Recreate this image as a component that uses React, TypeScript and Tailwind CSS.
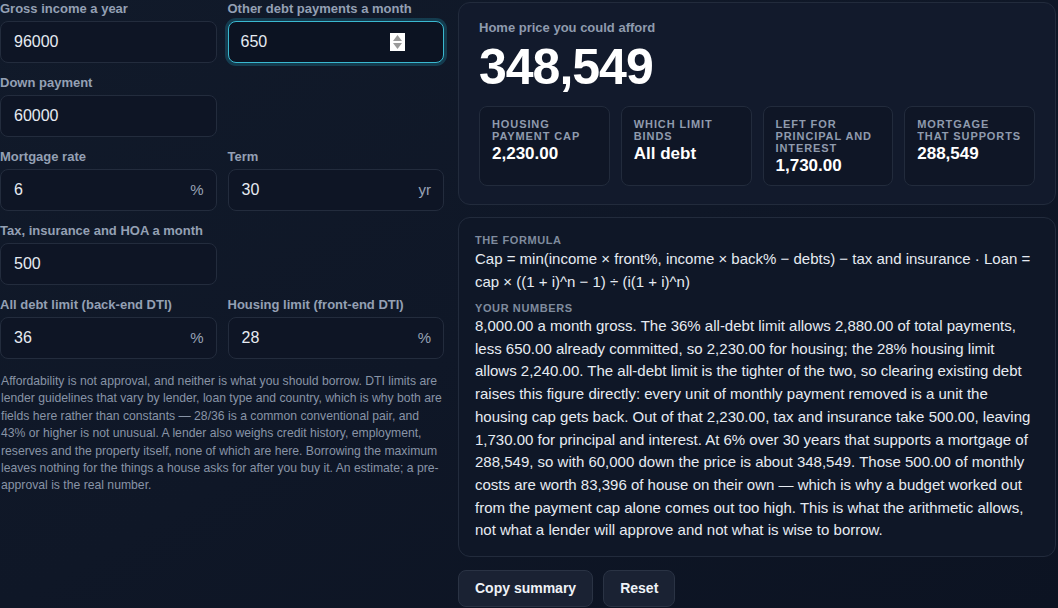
const font = { fontFamily: '"Liberation Sans", Arial, sans-serif' };

type FieldProps = {
  label: string;
  value: string;
  suffix?: string;
  focused?: boolean;
};

const Field = ({ label, value, suffix, focused }: FieldProps) => (
  <div className="flex flex-col">
    <label className="text-[13px] font-bold leading-[17px] text-[#94a0b4]">{label}</label>
    <div
      className={
        focused
          ? "relative mt-[4px] flex h-[42px] items-center rounded-lg border border-[#3ab8d0] bg-[#0c1322] pl-[12px] pr-[12px] shadow-[0_0_0_3px_rgba(34,150,180,0.28)]"
          : "relative mt-[4px] flex h-[42px] items-center rounded-lg border border-[#232c3d] bg-[#0e1525] pl-[13px] pr-[12px]"
      }
    >
      <span className="flex-1 text-[16px] text-[#e6ebf2]">{value}</span>
      {suffix && <span className="text-[15px] text-[#97a2b5]">{suffix}</span>}
      {focused && (
        <div className="absolute left-[161px] top-[11px] flex h-[18px] w-[15px] flex-col items-center justify-center gap-[2px] bg-white">
          <svg width="9" height="6" viewBox="0 0 9 6">
            <path d="M4.5 0L9 6H0z" fill="#9a9a9a" />
          </svg>
          <svg width="9" height="6" viewBox="0 0 9 6">
            <path d="M0 0h9L4.5 6z" fill="#9a9a9a" />
          </svg>
        </div>
      )}
    </div>
  </div>
);

const stats = [
  { label: "Housing payment cap", value: "2,230.00" },
  { label: "Which limit binds", value: "All debt" },
  { label: "Left for principal and interest", value: "1,730.00" },
  { label: "Mortgage that supports", value: "288,549" },
];

export default function App() {
  return (
    <div
      style={font}
      className="h-[608px] w-[1058px] overflow-hidden bg-gradient-to-br from-[#111a2a] via-[#0f1727] to-[#0c1322]"
    >
      <div className="grid grid-cols-[444px_600px] gap-[14px]">
        {/* Inputs */}
        <div className="flex flex-col">
          <div className="grid grid-cols-2 gap-x-[11px] gap-y-[11px]">
            <Field label="Gross income a year" value="96000" />
            <Field label="Other debt payments a month" value="650" focused />
            <Field label="Down payment" value="60000" />
            <div />
            <Field label="Mortgage rate" value="6" suffix="%" />
            <Field label="Term" value="30" suffix="yr" />
            <Field label="Tax, insurance and HOA a month" value="500" />
            <div />
            <Field label="All debt limit (back-end DTI)" value="36" suffix="%" />
            <Field label="Housing limit (front-end DTI)" value="28" suffix="%" />
          </div>
          <p className="mt-[14px] pl-[1px] text-[12.2px] leading-[17.4px] text-[#8894a6]">
            Affordability is not approval, and neither is what you should borrow. DTI limits are lender
            guidelines that vary by lender, loan type and country, which is why both are fields here rather
            than constants — 28/36 is a common conventional pair, and 43% or higher is not unusual. A lender
            also weighs credit history, employment, reserves and the property itself, none of which are here.
            Borrowing the maximum leaves nothing for the things a house asks for after you buy it. An
            estimate; a pre-approval is the real number.
          </p>
        </div>

        {/* Results */}
        <div className="flex flex-col">
          <div className="mt-[2px] w-[598px] rounded-xl border border-[#222b3c] bg-[#121a2c] px-[20px] pb-[18px] pt-[16px]">
            <div className="text-[13px] font-bold leading-[17px] text-[#8f9bae]">Home price you could afford</div>
            <div className="mt-[1px] text-[50px] font-bold leading-[60px] tracking-[-1px] text-white">348,549</div>
            <div className="mt-[9px] grid grid-cols-4 gap-[11px]">
              {stats.map((s) => (
                <div
                  key={s.label}
                  className="h-[80px] rounded-lg border border-[#222b3c] bg-[#0f1626] px-[12px] pt-[11px]"
                >
                  <div className="text-[11px] font-bold uppercase leading-[12px] tracking-[0.9px] text-[#8f9bae]">
                    {s.label}
                  </div>
                  <div className="mt-[1px] text-[17px] font-bold leading-[21px] text-white">{s.value}</div>
                </div>
              ))}
            </div>
          </div>

          <div className="mt-[12px] w-[598px] rounded-xl border border-[#222b3c] bg-[#0f1727] px-[16px] pb-[14px] pt-[15px]">
            <div className="text-[11px] font-bold uppercase leading-[14px] tracking-[0.6px] text-[#7f8b9e]">
              The formula
            </div>
            <p className="text-[15px] leading-[23px] text-[#e6ebf2]">
              Cap = min(income × front%, income × back% − debts) − tax and insurance · Loan = cap × ((1 +
              i)^n − 1) ÷ (i(1 + i)^n)
            </p>
            <div className="mt-[8px] text-[11px] font-bold uppercase leading-[14px] tracking-[0.6px] text-[#7f8b9e]">
              Your numbers
            </div>
            <p className="text-[15px] leading-[22.7px] text-[#e6ebf2]">
              8,000.00 a month gross. The 36% all-debt limit allows 2,880.00 of total payments, less 650.00
              already committed, so 2,230.00 for housing; the 28% housing limit allows 2,240.00. The all-debt
              limit is the tighter of the two, so clearing existing debt raises this figure directly: every
              unit of monthly payment removed is a unit the housing cap gets back. Out of that 2,230.00, tax
              and insurance take 500.00, leaving 1,730.00 for principal and interest. At 6% over 30 years that
              supports a mortgage of 288,549, so with 60,000 down the price is about 348,549. Those 500.00 of
              monthly costs are worth 83,396 of house on their own — which is why a budget worked out from the
              payment cap alone comes out too high. This is what the arithmetic allows, not what a lender will
              approve and not what is wise to borrow.
            </p>
          </div>

          <div className="mt-[13px] flex gap-[10px]">
            <button className="h-[37px] rounded-lg border border-[#2a3344] bg-[#1a2233] px-[16px] text-[14px] font-bold text-[#eef2f7]">
              Copy summary
            </button>
            <button className="h-[37px] rounded-lg border border-[#2a3344] bg-[#1a2233] px-[16px] text-[14px] font-bold text-[#eef2f7]">
              Reset
            </button>
          </div>
        </div>
      </div>
    </div>
  );
}
